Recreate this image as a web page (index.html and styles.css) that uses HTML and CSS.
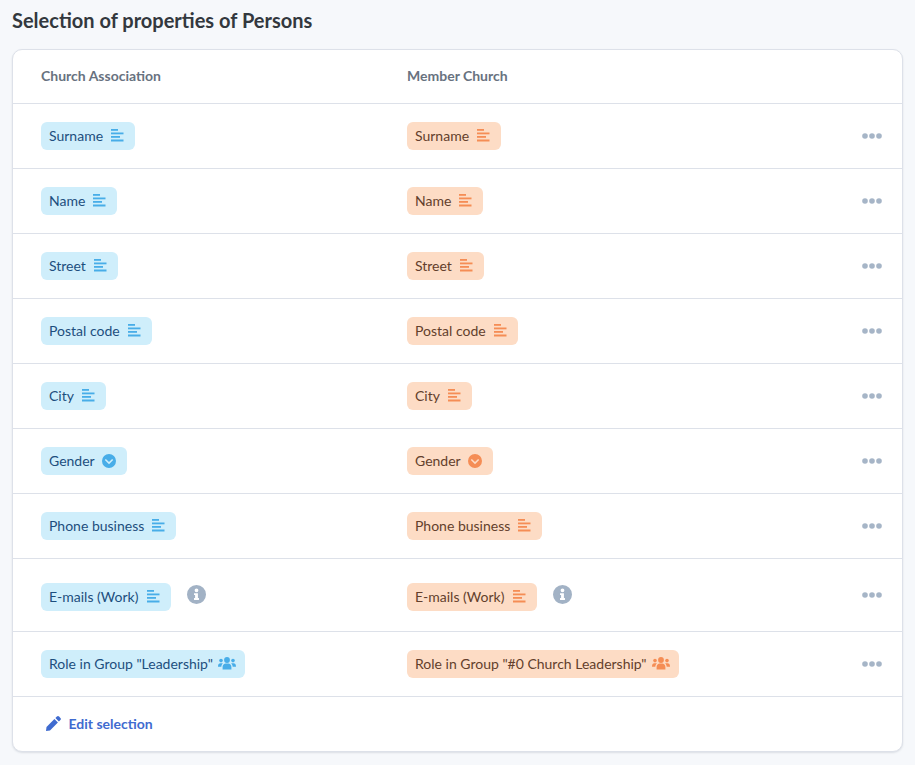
FILE: index.html
```html
<!DOCTYPE html>
<html lang="en">
<head>
<meta charset="utf-8">
<title>Selection of properties of Persons</title>
<link rel="stylesheet" href="styles.css">
</head>
<body>
<svg class="defs" width="0" height="0" aria-hidden="true">
  <defs>
    <symbol id="lines" viewBox="0 0 13 13">
      <rect x="0" y="0" width="7" height="1.8"/>
      <rect x="0" y="3.5" width="12.5" height="1.8"/>
      <rect x="0" y="7" width="9" height="1.8"/>
      <rect x="0" y="10.5" width="12.5" height="2"/>
    </symbol>
    <symbol id="chev" viewBox="0 0 14 14">
      <path fill-rule="evenodd" d="M7 0a7 7 0 1 1 0 14A7 7 0 0 1 7 0ZM3.9 4.9 2.8 6l4.2 4.2L11.2 6l-1.1-1.1L7 8Z"/>
    </symbol>
    <symbol id="group" viewBox="0 0 18 13">
      <circle cx="9" cy="3" r="2.9"/>
      <circle cx="3" cy="3.6" r="1.8"/>
      <circle cx="15" cy="3.6" r="1.8"/>
      <path d="M4.6 12.6V10c0-2 1.6-3.4 3-3.4h2.8c1.4 0 3 1.4 3 3.4v2.6Z"/>
      <path d="M0 9.4C0 7.4 1 6.2 2.4 6.2h1.5c.4 0 .8.1 1 .4-1 .7-1.5 1.9-1.6 3.2H0Z"/>
      <path d="M18 9.4c0-2-1-3.2-2.4-3.2h-1.5c-.4 0-.8.1-1 .4 1 .7 1.5 1.9 1.6 3.2H18Z"/>
    </symbol>
    <symbol id="info" viewBox="0 0 20 20">
      <path fill-rule="evenodd" d="M10 0a10 10 0 1 1 0 20 10 10 0 0 1 0-20Zm0 3.6a2 2 0 1 0 0 4 2 2 0 0 0 0-4ZM7.4 8.8v1.8h1.1v3.2H7.4v1.9h5.2v-1.9h-1.1V8.8Z"/>
    </symbol>
    <symbol id="dots" viewBox="0 0 20 6">
      <circle cx="3" cy="3" r="2.8"/>
      <circle cx="10" cy="3" r="2.8"/>
      <circle cx="17" cy="3" r="2.8"/>
    </symbol>
  </defs>
</svg>
<main class="page">
  <h1 class="title">Selection of properties of Persons</h1>
  <section class="card">
    <div class="row head">
      <div class="col">Church Association</div>
      <div class="col">Member Church</div>
    </div>
    <div class="row">
      <div class="col"><span class="pill blue">Surname<svg class="ico lines"><use href="#lines"/></svg></span></div>
      <div class="col"><span class="pill orange">Surname<svg class="ico lines"><use href="#lines"/></svg></span></div>
      <svg class="dots"><use href="#dots"/></svg>
    </div>
    <div class="row">
      <div class="col"><span class="pill blue">Name<svg class="ico lines"><use href="#lines"/></svg></span></div>
      <div class="col"><span class="pill orange">Name<svg class="ico lines"><use href="#lines"/></svg></span></div>
      <svg class="dots"><use href="#dots"/></svg>
    </div>
    <div class="row">
      <div class="col"><span class="pill blue">Street<svg class="ico lines"><use href="#lines"/></svg></span></div>
      <div class="col"><span class="pill orange">Street<svg class="ico lines"><use href="#lines"/></svg></span></div>
      <svg class="dots"><use href="#dots"/></svg>
    </div>
    <div class="row">
      <div class="col"><span class="pill blue">Postal code<svg class="ico lines"><use href="#lines"/></svg></span></div>
      <div class="col"><span class="pill orange">Postal code<svg class="ico lines"><use href="#lines"/></svg></span></div>
      <svg class="dots"><use href="#dots"/></svg>
    </div>
    <div class="row">
      <div class="col"><span class="pill blue">City<svg class="ico lines"><use href="#lines"/></svg></span></div>
      <div class="col"><span class="pill orange">City<svg class="ico lines"><use href="#lines"/></svg></span></div>
      <svg class="dots"><use href="#dots"/></svg>
    </div>
    <div class="row">
      <div class="col"><span class="pill blue">Gender<svg class="ico chev"><use href="#chev"/></svg></span></div>
      <div class="col"><span class="pill orange">Gender<svg class="ico chev"><use href="#chev"/></svg></span></div>
      <svg class="dots"><use href="#dots"/></svg>
    </div>
    <div class="row">
      <div class="col"><span class="pill blue">Phone business<svg class="ico lines"><use href="#lines"/></svg></span></div>
      <div class="col"><span class="pill orange">Phone business<svg class="ico lines"><use href="#lines"/></svg></span></div>
      <svg class="dots"><use href="#dots"/></svg>
    </div>
    <div class="row tall">
      <div class="col"><span class="pill blue">E-mails (Work)<svg class="ico lines"><use href="#lines"/></svg></span><svg class="info"><use href="#info"/></svg></div>
      <div class="col"><span class="pill orange">E-mails (Work)<svg class="ico lines"><use href="#lines"/></svg></span><svg class="info"><use href="#info"/></svg></div>
      <svg class="dots"><use href="#dots"/></svg>
    </div>
    <div class="row">
      <div class="col"><span class="pill blue">Role in Group "Leadership"<svg class="ico group"><use href="#group"/></svg></span></div>
      <div class="col"><span class="pill orange">Role in Group "#0 Church Leadership"<svg class="ico group"><use href="#group"/></svg></span></div>
      <svg class="dots"><use href="#dots"/></svg>
    </div>
    <div class="foot">
      <svg class="pencil" viewBox="0 0 15 15"><path d="M10.9.6a1.6 1.6 0 0 1 2.2 0l1.3 1.3a1.6 1.6 0 0 1 0 2.2l-1.5 1.5L9.4 2.1ZM8.4 3.1l3.5 3.5-7.9 7.9-4 .5.5-4Z"/></svg>
      <span class="edit">Edit selection</span>
    </div>
  </section>
</main>
</body>
</html>
```
FILE: styles.css
```css
* { box-sizing: border-box; }
html, body { margin: 0; padding: 0; }
body {
  width: 915px;
  height: 765px;
  overflow: hidden;
  background: #f6f8fb;
  font-family: Lato, "Liberation Sans", sans-serif;
}
.defs { position: absolute; }
.page { padding: 8px 12px 0; }
.title {
  margin: 0 0 17px;
  font-size: 20px;
  line-height: 24px;
  font-weight: 700;
  color: #33383e;
}
.card {
  width: 891px;
  height: 703px;
  background: #fff;
  border: 1px solid #dde1e9;
  border-radius: 10px;
  box-shadow: 0 1px 2px rgba(60, 70, 90, 0.14);
}
.row {
  display: flex;
  align-items: center;
  height: 65px;
  padding-left: 28px;
  border-bottom: 1px solid #dde1e9;
}
.row.head {
  height: 54px;
  padding-bottom: 2px;
  font-size: 14px;
  font-weight: 700;
  color: #68727f;
}
.row.tall { height: 73px; padding-top: 4px; }
.tall .ico.lines { margin-left: 9px; }
.col {
  display: flex;
  align-items: center;
  width: 366px;
  flex: none;
}
.pill {
  display: inline-flex;
  align-items: center;
  height: 28px;
  padding: 0 11px 2px 8px;
  border-radius: 6px;
  font-size: 14px;
  white-space: nowrap;
}
.pill.blue { background: #cfeefb; color: #1d4e7e; }
.pill.orange { background: #fddcc5; color: #633f2c; }
.ico { flex: none; margin: 1px 0 0 8px; }
.blue .ico { fill: #48ade8; }
.orange .ico { fill: #f58d55; }
.ico.lines { width: 13px; height: 13px; }
.ico.chev { width: 14px; height: 14px; margin-left: 7px; }
.ico.group { width: 18px; height: 13px; margin-left: 5px; margin-right: -2px; }
.info {
  width: 19px;
  height: 19px;
  margin: -5px 0 0 16px;
  fill: #a2b2c5;
}
.dots {
  width: 20px;
  height: 6px;
  margin: -1px 0 0 89px;
  fill: #a6b5c7;
}
.tall .dots { margin-top: -5px; }
.foot {
  display: flex;
  align-items: center;
  height: 54px;
  padding: 0 0 2px 33px;
  font-size: 14px;
  font-weight: 700;
  color: #3f6bd0;
}
.pencil { width: 15px; height: 15px; fill: #3f6bd0; margin-right: 7.5px; }
```
